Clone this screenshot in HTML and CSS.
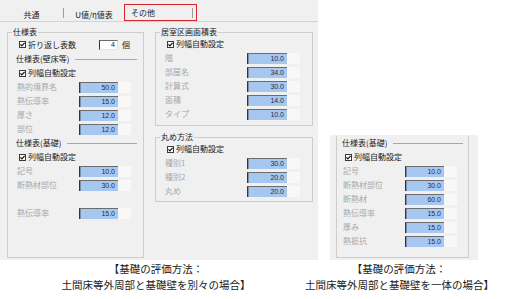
FILE: index.html
```html
<!DOCTYPE html>
<html lang="ja">
<head>
    <meta charset="UTF-8">
    <meta name="viewport" content="width=device-width, initial-scale=1.0">
    <title>その他設定</title>
    <link rel="stylesheet" href="styles.css">
</head>
<body>
    <div class="figures">
        <!-- 基礎を別々に入力する画面 -->
        <div class="shot shot-main">
            <div class="tabs">
                <div class="tab tab-common">共通</div>
                <span class="sep"></span>
                <div class="tab tab-uvalue">U値/η値表</div>
                <div class="tab tab-active">その他<span class="sep"></span></div>
            </div>

            <div class="panes">
                <fieldset class="group group-spec">
                    <legend>仕様表</legend>
                    <div class="row row-first check">
                        <svg class="box" width="7" height="7" viewBox="0 0 7 7"><rect x="0.5" y="0.5" width="6" height="6" fill="#fff" stroke="#3a3a3a"/><path d="M1.4 3.3 L2.9 4.9 L5.6 1.8" fill="none" stroke="#111" stroke-width="1.2"/></svg>
                        <span class="check-text wide">折り返し表数</span>
                        <span class="count">4</span>
                        <span class="unit">個</span>
                    </div>
                    <div class="row heading">仕様表(壁床等)</div>
                    <div class="row check">
                        <svg class="box" width="7" height="7" viewBox="0 0 7 7"><rect x="0.5" y="0.5" width="6" height="6" fill="#fff" stroke="#3a3a3a"/><path d="M1.4 3.3 L2.9 4.9 L5.6 1.8" fill="none" stroke="#111" stroke-width="1.2"/></svg>
                        <span>列幅自動設定</span>
                    </div>
                    <div class="row"><span class="label">熱的境界名</span><span class="val">50.0</span><span class="spare"></span></div>
                    <div class="row"><span class="label">熱伝導率</span><span class="val">15.0</span><span class="spare"></span></div>
                    <div class="row"><span class="label">厚さ</span><span class="val">12.0</span><span class="spare"></span></div>
                    <div class="row"><span class="label">部位</span><span class="val">12.0</span><span class="spare"></span></div>
                    <div class="row heading">仕様表(基礎)</div>
                    <div class="row check">
                        <svg class="box" width="7" height="7" viewBox="0 0 7 7"><rect x="0.5" y="0.5" width="6" height="6" fill="#fff" stroke="#3a3a3a"/><path d="M1.4 3.3 L2.9 4.9 L5.6 1.8" fill="none" stroke="#111" stroke-width="1.2"/></svg>
                        <span>列幅自動設定</span>
                    </div>
                    <div class="row"><span class="label">記号</span><span class="val">10.0</span><span class="spare"></span></div>
                    <div class="row"><span class="label">断熱材部位</span><span class="val">30.0</span><span class="spare"></span></div>
                    <div class="row"></div>
                    <div class="row"><span class="label">熱伝導率</span><span class="val">15.0</span><span class="spare"></span></div>
                </fieldset>

                <div class="pane-col">
                    <fieldset class="group group-room">
                        <legend>居室区画面積表</legend>
                        <div class="row check">
                            <svg class="box" width="7" height="7" viewBox="0 0 7 7"><rect x="0.5" y="0.5" width="6" height="6" fill="#fff" stroke="#3a3a3a"/><path d="M1.4 3.3 L2.9 4.9 L5.6 1.8" fill="none" stroke="#111" stroke-width="1.2"/></svg>
                            <span>列幅自動設定</span>
                        </div>
                        <div class="row"><span class="label">階</span><span class="val">10.0</span><span class="spare"></span></div>
                        <div class="row"><span class="label">部屋名</span><span class="val">34.0</span><span class="spare"></span></div>
                        <div class="row"><span class="label">計算式</span><span class="val">30.0</span><span class="spare"></span></div>
                        <div class="row"><span class="label">面積</span><span class="val">14.0</span><span class="spare"></span></div>
                        <div class="row"><span class="label">タイプ</span><span class="val">10.0</span><span class="spare"></span></div>
                    </fieldset>

                    <fieldset class="group group-round">
                        <legend>丸め方法</legend>
                        <div class="row check">
                            <svg class="box" width="7" height="7" viewBox="0 0 7 7"><rect x="0.5" y="0.5" width="6" height="6" fill="#fff" stroke="#3a3a3a"/><path d="M1.4 3.3 L2.9 4.9 L5.6 1.8" fill="none" stroke="#111" stroke-width="1.2"/></svg>
                            <span>列幅自動設定</span>
                        </div>
                        <div class="row"><span class="label">種別1</span><span class="val">30.0</span><span class="spare"></span></div>
                        <div class="row"><span class="label">種別2</span><span class="val">20.0</span><span class="spare"></span></div>
                        <div class="row"><span class="label">丸め</span><span class="val">20.0</span><span class="spare"></span></div>
                    </fieldset>
                </div>
            </div>
        </div>

        <!-- 基礎を一体で入力する画面（切り抜き） -->
        <div class="shot shot-sub">
            <div class="group group-cut">
                <div class="row heading">仕様表(基礎)</div>
                <div class="row check">
                    <svg class="box" width="7" height="7" viewBox="0 0 7 7"><rect x="0.5" y="0.5" width="6" height="6" fill="#fff" stroke="#3a3a3a"/><path d="M1.4 3.3 L2.9 4.9 L5.6 1.8" fill="none" stroke="#111" stroke-width="1.2"/></svg>
                    <span>列幅自動設定</span>
                </div>
                <div class="row"><span class="label">記号</span><span class="val">10.0</span><span class="spare"></span></div>
                <div class="row"><span class="label">断熱材部位</span><span class="val">30.0</span><span class="spare"></span></div>
                <div class="row"><span class="label">断熱材</span><span class="val">60.0</span><span class="spare"></span></div>
                <div class="row"><span class="label">熱伝導率</span><span class="val">15.0</span><span class="spare"></span></div>
                <div class="row"><span class="label">厚み</span><span class="val">15.0</span><span class="spare"></span></div>
                <div class="row"><span class="label">熱抵抗</span><span class="val">15.0</span><span class="spare"></span></div>
            </div>
        </div>

        <p class="caption caption-left">【基礎の評価方法：<br>土間床等外周部と基礎壁を別々の場合】</p>
        <p class="caption caption-right">【基礎の評価方法：<br>土間床等外周部と基礎壁を一体の場合】</p>
    </div>
</body>
</html>
```

FILE: styles.css
```css
/* 全体 */
body {
    margin: 0;
    background: #fff;
    color: #1a1a1a;
    font-family: "Noto Sans CJK JP", sans-serif;
}

.figures {
    display: grid;
    grid-template-columns: 318px 148px;
    column-gap: 12px;
}

.shot {
    background: #f0f0f0;
    box-sizing: border-box;
}

.shot-main {
    height: 260px;
    display: flex;
    flex-direction: column;
}

.shot-sub {
    height: 125px;
    align-self: end;
    padding-top: 1px;
}

/* タブ */
.tabs {
    display: flex;
    align-items: flex-end;
    height: 21px;
    border-bottom: 1px solid #d4d4d4;
    font-size: 8px;
    line-height: 10px;
}

.tab {
    display: flex;
    align-items: center;
    justify-content: center;
    height: 17px;
    box-sizing: border-box;
}

.tab-common {
    width: 63px;
    padding-top: 4px;
}

.tab-uvalue {
    width: 60px;
    padding-top: 4px;
}

.tab-active {
    width: 73px;
    border: 1px solid #d8262c;
    padding-left: 6px;
    justify-content: space-between;
    padding-right: 3px;
}

.sep {
    width: 1px;
    height: 10px;
    background: #9c9c9c;
    margin-bottom: 3px;
}

.tab-active .sep {
    margin: 0;
}

/* グループ */
.panes {
    flex: 1;
    display: flex;
    gap: 11px;
    padding: 5px 0 2px 7px;
}

.pane-col {
    display: flex;
    flex-direction: column;
    gap: 6px;
}

.group {
    margin: 0;
    min-width: 0;
    box-sizing: border-box;
    border: 1px solid #cdcdcd;
    padding: 0 12px 0 9px;
    font-size: 8px;
    line-height: 10px;
}

.group legend {
    padding: 0 1px;
    margin-left: -5px;
    font-size: 8px;
    line-height: 10px;
}

.group-spec {
    width: 137px;
}

.group-room,
.group-round {
    width: 158px;
}

.group-room {
    padding-bottom: 4px;
}

.group-round {
    padding-bottom: 3px;
}

.group-cut {
    width: 133px;
    margin-left: 6px;
    border-top: 0;
    padding: 0 11px 9px 6px;
}

/* 行 */
.row {
    display: flex;
    align-items: center;
    height: 14px;
}

.row-first {
    height: 15px;
}

.label {
    width: 62px;
    color: #a8a8a8;
    white-space: nowrap;
}

.group-room .label,
.group-round .label {
    width: 82px;
}

.val {
    width: 39px;
    height: 11px;
    box-sizing: border-box;
    background: #a6c8f0;
    border-top: 1px solid #6c6c6c;
    border-left: 1px solid #353535;
    box-shadow: inset 1px 0 0 #7d8ea6;
    padding-right: 3px;
    text-align: right;
    font: 7px/10px "Liberation Sans", sans-serif;
    color: #1c2c4c;
}

.group-room .val,
.group-round .val {
    width: 40px;
}

.spare {
    width: 13px;
    height: 11px;
    background: #f8f8f8;
}

.heading {
    margin-left: -1px;
    white-space: nowrap;
}

.heading::after {
    content: "";
    flex: 1;
    border-top: 1px solid #a8a8a8;
    margin: 0 -6px 0 6px;
}

.check .box {
    margin: 0 2px 0 2px;
    flex: none;
}

.check-text.wide {
    width: 71px;
}

.count {
    width: 19px;
    height: 10px;
    box-sizing: border-box;
    background: #fff;
    border-top: 1px solid #6c6c6c;
    border-left: 1px solid #353535;
    border-right: 1px solid #e4e4e4;
    border-bottom: 1px solid #e4e4e4;
    padding-right: 2px;
    text-align: right;
    font: 7px/8px "Liberation Sans", sans-serif;
}

.unit {
    margin-left: 4px;
}

/* 説明文 */
.caption {
    margin: 1px 0 0;
    font-size: 10.5px;
    line-height: 16px;
    text-align: center;
    white-space: nowrap;
    color: #1a1a1a;
}

.caption-left {
    padding-right: 6px;
}

.caption-right {
    margin-left: -25px;
    margin-right: -15px;
}
```
